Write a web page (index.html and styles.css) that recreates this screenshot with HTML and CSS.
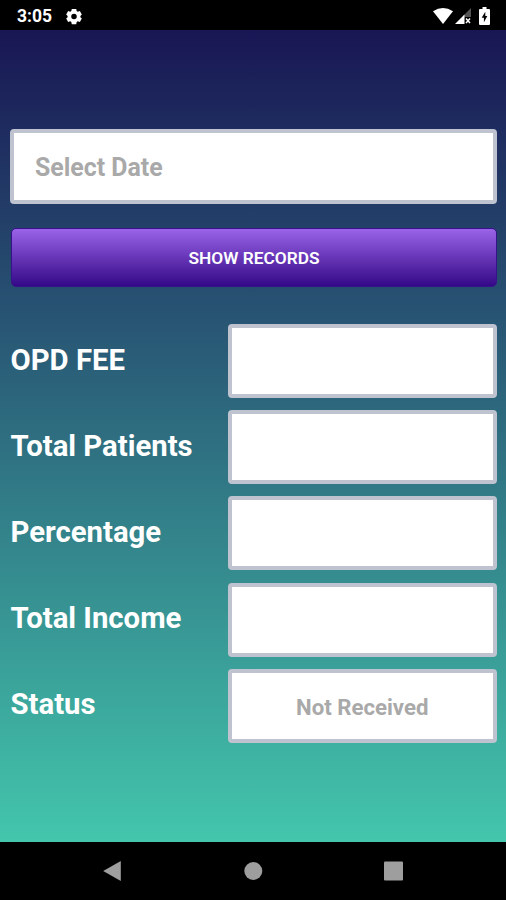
FILE: index.html
```html
<!DOCTYPE html>
<html lang="en">

<head>
  <meta charset="UTF-8">
  <meta name="viewport" content="width=device-width, initial-scale=1.0">
  <title>Records</title>
  <link rel="stylesheet" href="styles.css">
</head>

<body>
  <div class="status-bar">
    <span class="clock">3:05</span>
    <svg class="gear" viewBox="0 0 18 18">
      <path fill-rule="evenodd" d="M6.500 0.500h5l.5 2.400 1.300.8 2.300-.8 2.200 3.900-1.600 1.500v1.500l1.600 1.500-2.200 3.900-2.300-.8-1.300.8-.5 2.400h-5L6 15.200l-1.300-.8-2.300.8L.2 11.300l1.600-1.500V8.300L.2 6.800l2.200-3.900 2.300.8L6 2.900zM9 5.900a3.100 3.100 0 1 0 0 6.200 3.100 3.100 0 0 0 0-6.200z"/>
    </svg>
    <div class="system-icons">
      <svg class="wifi" viewBox="0 0 20 16">
        <path d="M0 3.300Q10-3.300 20 3.300L10 16z"/>
      </svg>
      <svg class="signal" viewBox="0 0 16 16">
        <path class="dim" d="M16 0v9H9.500v1L8 8z"/>
        <path d="M0 16L9.500 6.500V16z"/>
        <path class="cross" d="M11 10.500l4 4.500M15 10.500L11 15"/>
      </svg>
      <svg class="battery" viewBox="0 0 11 18">
        <path fill-rule="evenodd" d="M3.500 0h4v2H10q1 0 1 1v14q0 1-1 1H1q-1 0-1-1V3q0-1 1-1h2.500zM6.300 4.700L2.700 10.800h2.200v4.400L8.300 9H6.300z"/>
      </svg>
    </div>
  </div>

  <div class="content">
    <input class="field date" type="text" placeholder="Select Date">
    <button class="show-button">SHOW RECORDS</button>

    <div class="records">
      <div class="row">
        <label for="fee">OPD FEE</label>
        <input class="field" type="text" id="fee">
      </div>
      <div class="row">
        <label for="patients">Total Patients</label>
        <input class="field" type="text" id="patients">
      </div>
      <div class="row">
        <label for="percentage">Percentage</label>
        <input class="field" type="text" id="percentage">
      </div>
      <div class="row">
        <label for="income">Total Income</label>
        <input class="field" type="text" id="income">
      </div>
      <div class="row">
        <label for="status">Status</label>
        <input class="field" type="text" id="status" placeholder="Not Received">
      </div>
    </div>
  </div>

  <div class="nav-bar">
    <svg class="nav-icon" viewBox="0 0 20 22">
      <path d="M1.200 11L18.800 1v20z"/>
    </svg>
    <svg class="nav-icon" viewBox="0 0 20 22">
      <circle cx="10.300" cy="11" r="9"/>
    </svg>
    <svg class="nav-icon" viewBox="0 0 20 22">
      <rect x="0" y="1.500" width="19" height="19" rx="1"/>
    </svg>
  </div>
</body>

</html>
```

FILE: styles.css
```css
* {
  box-sizing: border-box;
}

body {
  margin: 0;
  height: 900px;
  display: flex;
  flex-direction: column;
  overflow: hidden;
  background-color: #000;
  color: #fff;
  font-family: Roboto, Arial, sans-serif;
}

.status-bar {
  height: 30px;
  display: flex;
  align-items: center;
  padding: 2px 16px 0 17px;
  fill: #fff;
}

.clock {
  font-size: 17.500px;
  font-weight: 700;
  line-height: 28px;
}

.gear {
  width: 16px;
  height: 17px;
  margin-left: 14px;
}

.system-icons {
  display: flex;
  align-items: center;
  margin-left: auto;
}

.wifi {
  width: 20px;
  height: 16px;
}

.signal {
  width: 16px;
  height: 16px;
  margin-left: 2px;
}

.dim {
  fill: #555;
}

.cross {
  stroke: #fff;
  stroke-width: 1.5;
}

.battery {
  width: 11px;
  height: 18px;
  margin-left: 8px;
}

.content {
  height: 812px;
  padding: 99px 9px 0 10px;
  background: linear-gradient(#191654, #43c6ac);
}

.field {
  width: 270px;
  height: 74px;
  padding: 2px 0 0;
  border: 4px solid #bfc3d0;
  border-radius: 4px;
  outline: none;
  background-color: #fff;
  color: #333;
  font-family: inherit;
  font-size: 22.200px;
  font-weight: 700;
  text-align: center;
}

.field::placeholder {
  color: #a9a9a9;
  opacity: 1;
}

.date {
  display: block;
  width: 487px;
  height: 75px;
  padding: 2px 21px 0;
  font-size: 24.900px;
  text-align: left;
}

.show-button {
  display: block;
  width: 486px;
  height: 59px;
  margin: 24px 0 0 1px;
  padding: 1px 0 0;
  border: 1px solid #38128a;
  border-radius: 5px;
  background: linear-gradient(#9a63e8, #340987);
  color: #fff;
  font-family: inherit;
  font-size: 17.300px;
  font-weight: 600;
}

.records {
  display: flex;
  flex-direction: column;
  gap: 12.200px;
  margin-top: 37px;
}

.row {
  display: flex;
  justify-content: space-between;
  align-items: center;
}

.row .field {
  width: 269.500px;
  height: 74px;
}

.row label {
  padding: 0 0 3px 0.500px;
  font-size: 29.300px;
  font-weight: 700;
}

.nav-bar {
  height: 58px;
  display: flex;
  justify-content: space-between;
  align-items: center;
  padding: 0 102px;
  fill: #9e9e9e;
}

.nav-icon {
  width: 20px;
  height: 22px;
}
```
